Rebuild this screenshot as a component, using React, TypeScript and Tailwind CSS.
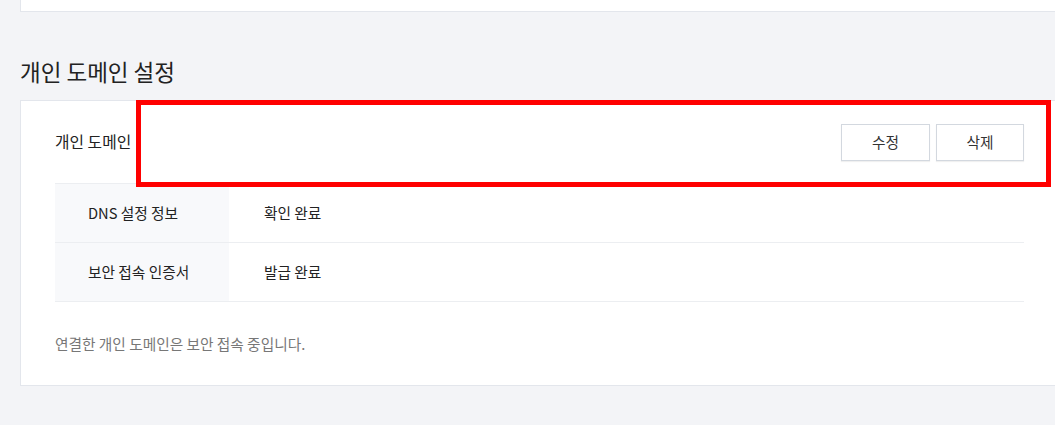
import React from "react";

const font = { fontFamily: '"Noto Sans CJK KR", "Noto Sans", sans-serif' };

export default function App() {
  return (
    <div
      className="relative w-[1055px] h-[425px] overflow-hidden bg-[#f3f4f7] text-[#222]"
      style={font}
    >
      <div className="pl-[20px]">
        <div className="h-[12px] w-[1039px] bg-white border border-t-0 border-[#e3e6ec]" />
        <h2 className="mt-[44px] h-[44px] text-[22.5px] leading-[30px] font-normal text-[#222]">
          개인 도메인 설정
        </h2>
        <div className="w-[1039px] h-[286px] bg-white border border-[#e3e6ec] px-[34px]">
          <div className="w-[969px] flex items-center justify-between h-[82px]">
            <span className="text-[15.8px]">개인 도메인</span>
            <div className="flex gap-[6px]">
              <button className="w-[89px] h-[37px] bg-white border border-[#d3d8df] shadow-[0_1px_1px_rgba(0,0,0,0.06)] text-[14.7px] text-[#333]">
                수정
              </button>
              <button className="w-[88px] h-[37px] bg-white border border-[#d3d8df] shadow-[0_1px_1px_rgba(0,0,0,0.06)] text-[14.7px] text-[#333]">
                삭제
              </button>
            </div>
          </div>
          <div className="w-[969px] border-t border-[#eceef1]">
            <div className="flex h-[59px] border-b border-[#eceef1] text-[14.7px]">
              <div className="w-[174px] bg-[#f8f9fb] flex items-center pl-[33px]">DNS 설정 정보</div>
              <div className="flex items-center pl-[35px]">확인 완료</div>
            </div>
            <div className="flex h-[59px] border-b border-[#eceef1] text-[14.7px]">
              <div className="w-[174px] bg-[#f8f9fb] flex items-center pl-[33px]">보안 접속 인증서</div>
              <div className="flex items-center pl-[35px]">발급 완료</div>
            </div>
          </div>
          <p className="mt-[32px] text-[14.7px] leading-[20px] text-[#777]">
            연결한 개인 도메인은 보안 접속 중입니다.
          </p>
        </div>
      </div>
      <div className="absolute left-[136px] top-[100px] w-[915px] h-[87px] border-[5px] border-[#ff0000]" />
    </div>
  );
}
